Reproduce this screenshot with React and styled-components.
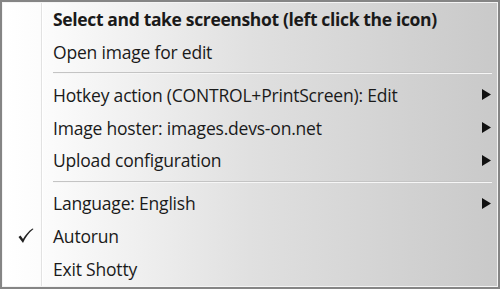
import React from "react"
import styled, { createGlobalStyle } from "styled-components"

const GlobalStyle = createGlobalStyle`
  html, body {
    margin: 0;
    padding: 0;
    background: #ffffff;
  }
`

const Menu = styled.div`
  box-sizing: border-box;
  width: 500px;
  height: 289px;
  border: 2px solid #858585;
  box-shadow: inset 0 0 0 1px #f4f4f4;
  background: linear-gradient(to right, #ffffff 0%, #fbfbfb 10%, #e0e0e0 50%, #c9c9c9 100%);
  display: flex;
  flex-direction: column;
  padding: 1px 0 2px 0;
  font-family: "Open Sans", "Noto Sans", sans-serif;
  font-size: 17.5px;
  color: #1a1a1a;
  position: relative;
`

const Gutter = styled.div`
  position: absolute;
  top: 1px;
  bottom: 1px;
  left: 39px;
  width: 2px;
  border-left: 1px solid #e2e2e2;
  border-right: 1px solid #ffffff;
  box-sizing: border-box;
`

const Row = styled.div`
  display: grid;
  grid-template-columns: 51px 1fr 16px;
  align-items: center;
  height: 33px;
  font-weight: ${(p) => (p.$bold ? 700 : 400)};
  letter-spacing: ${(p) => (p.$bold ? "-0.35px" : "-0.2px")};
`

const Check = styled.span`
  display: flex;
  justify-content: center;
  padding-right: 4px;
`

const Label = styled.span`
  white-space: nowrap;
`

const Arrow = styled.span`
  display: flex;
  justify-content: flex-start;
`

const Separator = styled.div`
  height: 10px;
  display: flex;
  align-items: center;
  padding-left: 51px;
  padding-right: 6px;
  &::after {
    content: "";
    flex: 1;
    height: 1px;
    background: #c4c4c4;
    border-bottom: 1px solid #f6f6f6;
  }
`

function SubArrow() {
  return (
    <svg width="9" height="11" viewBox="0 0 9 11">
      <path d="M0 0 L9 5.5 L0 11 Z" fill="#111" />
    </svg>
  )
}

function Tick() {
  return (
    <svg width="16" height="16" viewBox="0 0 16 16">
      <path
        d="M0.5 9 L5 15 C7.5 9.5 10.5 5 15.5 1 L14.5 0.5 C10 3.5 7.5 7 5 11 L2.5 7.5 Z"
        fill="#222"
      />
    </svg>
  )
}

const items = [
  { label: "Select and take screenshot (left click the icon)", bold: true },
  { label: "Open image for edit" },
  "sep",
  { label: "Hotkey action (CONTROL+PrintScreen): Edit", sub: true },
  { label: "Image hoster: images.devs-on.net", sub: true },
  { label: "Upload configuration", sub: true },
  "sep",
  { label: "Language: English", sub: true },
  { label: "Autorun", checked: true },
  { label: "Exit Shotty" },
]

export default function App() {
  return (
    <>
      <GlobalStyle />
      <Menu>
        <Gutter />
        {items.map((item, i) =>
          item === "sep" ? (
            <Separator key={i} />
          ) : (
            <Row key={i} $bold={item.bold}>
              <Check>{item.checked && <Tick />}</Check>
              <Label>{item.label}</Label>
              <Arrow>{item.sub && <SubArrow />}</Arrow>
            </Row>
          )
        )}
      </Menu>
    </>
  )
}
